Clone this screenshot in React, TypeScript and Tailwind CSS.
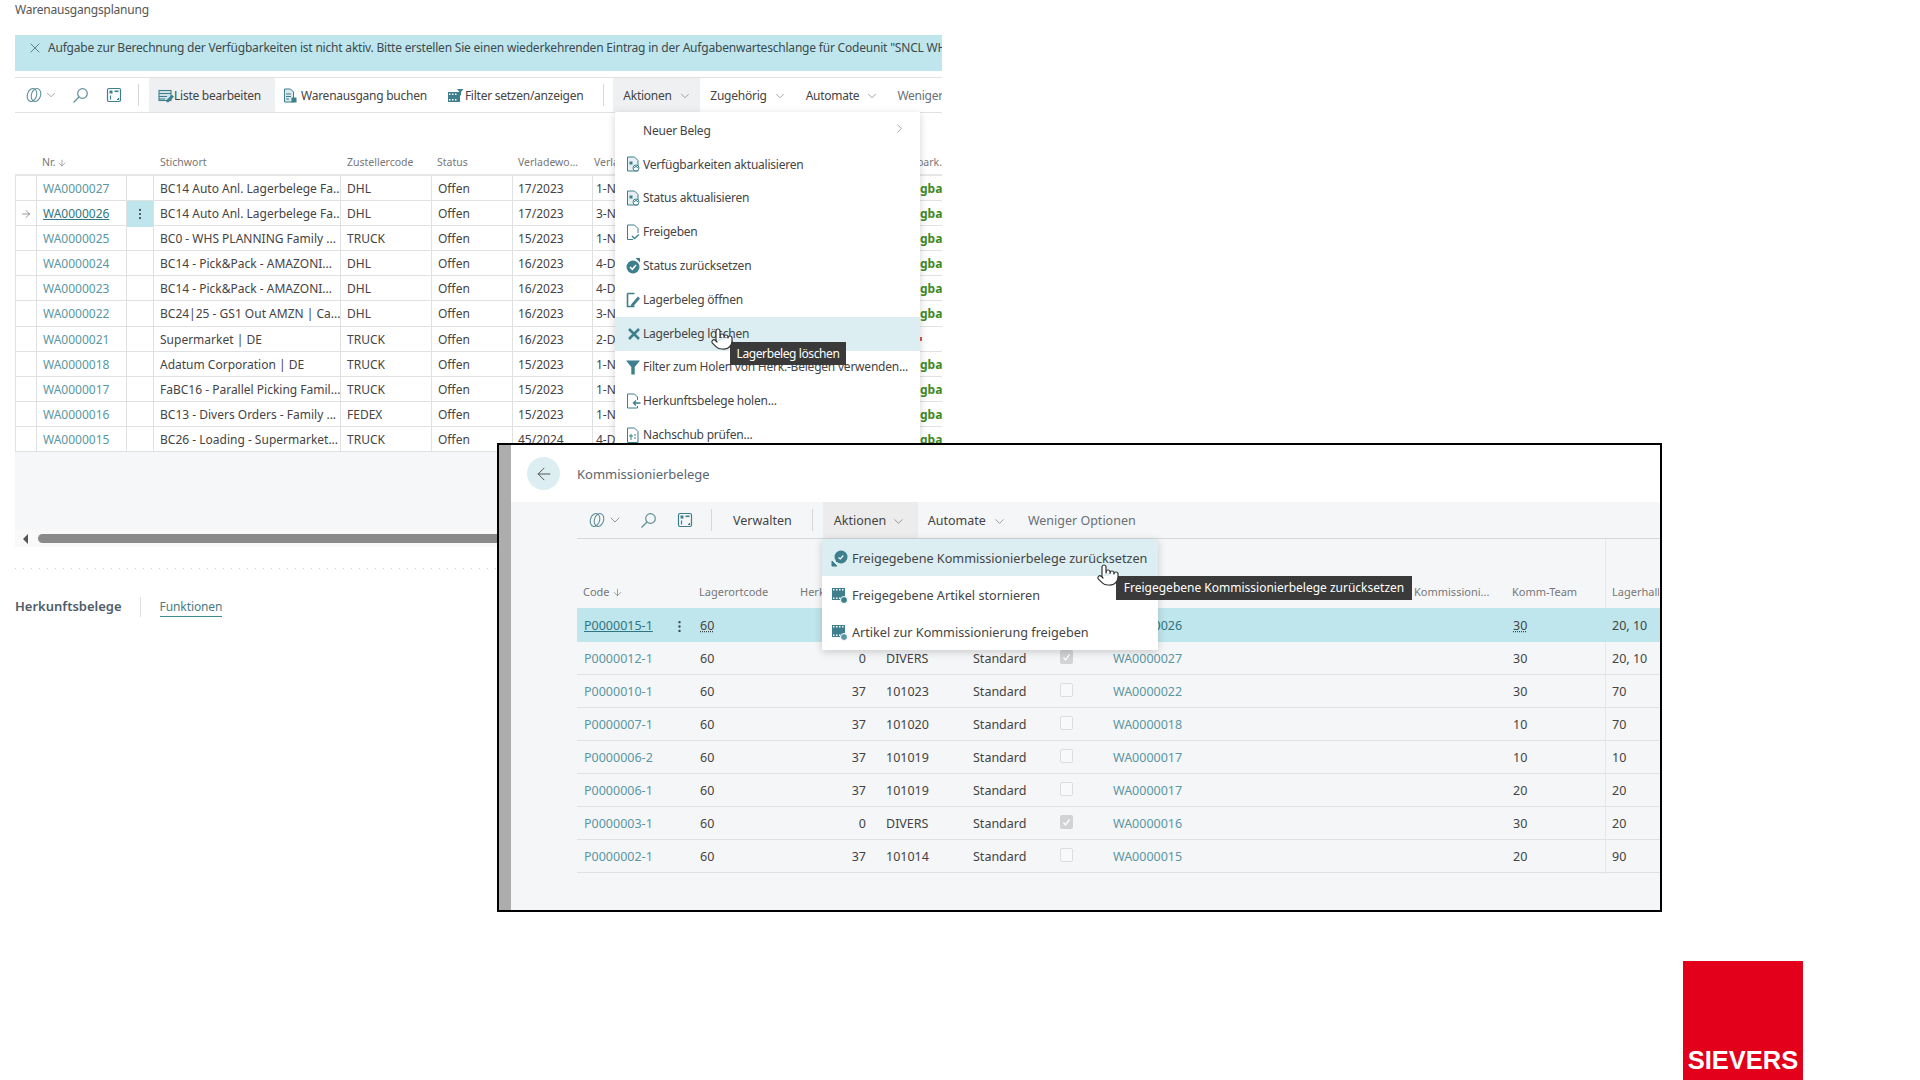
import { ArrowDown, ArrowLeft, ArrowRight, ChevronDown, ChevronRight, EllipsisVertical, Pointer, X } from "lucide-react";

const TEAL = "#3d7f8c";

const CopilotIcon = () => (
  <svg width="18" height="18" viewBox="0 0 18 18" fill="none" stroke="#5f8f99" strokeWidth="1.1">
    <ellipse cx="7" cy="9" rx="4.6" ry="6.6" transform="rotate(18 7 9)" />
    <ellipse cx="11" cy="9" rx="4.6" ry="6.6" transform="rotate(18 11 9)" />
  </svg>
);

const SearchIcon = () => (
  <svg width="17" height="17" viewBox="0 0 17 17" fill="none" stroke="#5f8f99" strokeWidth="1.2">
    <circle cx="10.5" cy="6.5" r="4.8" />
    <path d="M7 10 1.500 15.500" />
  </svg>
);

const TellIcon = () => (
  <svg width="16" height="16" viewBox="0 0 16 16" fill="none" stroke={TEAL} strokeWidth="1.2">
    <rect x="1.500" y="1.500" width="13" height="13" rx="1.500" />
    <rect x="3.500" y="3.500" width="3" height="3" fill={TEAL} stroke="none" />
    <rect x="8.500" y="3.500" width="4" height="1.600" fill={TEAL} stroke="none" />
    <path d="M4.500 8.500v4M11 12.500h1.500V11" />
  </svg>
);

const EditListIcon = () => (
  <svg width="16" height="16" viewBox="0 0 16 16" fill="none" stroke={TEAL} strokeWidth="1.1">
    <rect x="1" y="2.500" width="12" height="10" fill="#cfe3e7" />
    <path d="M1 5.500h12M1 8.500h8M1 11h6" />
    <path d="m9 12.500 5-5 1.200 1.200-5 5H9z" fill={TEAL} />
  </svg>
);

const PostIcon = () => (
  <svg width="16" height="16" viewBox="0 0 16 16" fill="none" stroke={TEAL} strokeWidth="1">
    <path d="M2.500 1h6l3 3v10h-9z" fill="#dbe9ec" />
    <path d="M4 6h5M4 8.500h5M4 11h3" />
    <rect x="9.500" y="9.500" width="5" height="5" fill={TEAL} stroke="none" />
  </svg>
);

const FilterFilmIcon = () => (
  <svg width="17" height="16" viewBox="0 0 17 16" fill={TEAL}>
    <rect x="1" y="4" width="12" height="10" />
    <path d="M2 5.500h1.500v1.500H2zM5 5.500h1.500v1.500H5zM8 5.500h1.500v1.500H8zM2 11h1.500v1.500H2zM5 11h1.500v1.500H5zM8 11h1.500v1.500H8z" fill="#fff" />
    <path d="M10 1h6.500l-2.500 3v3l-1.500 1V4z" />
  </svg>
);

const DocRefreshIcon = () => (
  <svg width="15" height="17" viewBox="0 0 15 17" fill="none" stroke={TEAL} strokeWidth="1">
    <path d="M1.500 1h7l3.500 3.500V15h-10.500z" fill="#e6f0f2" />
    <rect x="3.500" y="5.500" width="3" height="3" fill={TEAL} stroke="none" />
    <circle cx="10" cy="12" r="3" fill="#fff" />
    <path d="M8.500 12a1.500 1.500 0 0 1 3 0" />
  </svg>
);

const DocCheckIcon = () => (
  <svg width="15" height="17" viewBox="0 0 15 17" fill="none" stroke={TEAL} strokeWidth="1">
    <path d="M1.500 1h7l3.500 3.500V9M7 15.500H1.500V1" />
    <path d="m6 12 2.500 2.500L13 10.500" strokeWidth="1.300" />
  </svg>
);

const ResetIcon = () => (
  <svg width="15" height="16" viewBox="0 0 15 16">
    <circle cx="7" cy="9" r="6.500" fill={TEAL} />
    <path d="m4 9 2.300 2.300L10 7" fill="none" stroke="#fff" strokeWidth="1.500" />
    <path d="M9.500 0h4.500v4.500z" fill={TEAL} />
  </svg>
);

const DocEditIcon = () => (
  <svg width="15" height="16" viewBox="0 0 15 16" fill="none" stroke={TEAL} strokeWidth="1">
    <path d="M1.500 1.500h7M1.500 1.500v13h7" strokeWidth="1.600" />
    <path d="m5 12.500 7-8 2 2-7 8H5z" fill={TEAL} stroke="none" />
  </svg>
);

const DeleteIcon = () => (
  <svg width="14" height="14" viewBox="0 0 14 14" fill="none" stroke={TEAL} strokeWidth="2.500">
    <path d="m2 2 10 10M12 2 2 12" />
  </svg>
);

const FunnelIcon = () => (
  <svg width="16" height="16" viewBox="0 0 16 16" fill={TEAL}>
    <path d="M1 1.500h14l-5.300 6.500v7.500H6.300V8z" />
  </svg>
);

const DocArrowIcon = () => (
  <svg width="15" height="16" viewBox="0 0 15 16" fill="none" stroke={TEAL} strokeWidth="1">
    <path d="M1.500 1h7l3 3v3M11.500 13v2h-10V1" />
    <path d="M14.500 10h-7M10 7.500 7.500 10l2.500 2.500" strokeWidth="1.400" />
  </svg>
);

const DocListIcon = () => (
  <svg width="15" height="17" viewBox="0 0 15 17" fill="none" stroke={TEAL} strokeWidth="1">
    <path d="M1.500 1h7l3.500 3.500V15.500h-10.500z" />
    <path d="M4 8h2v2H4zM4 12h2M8 8h2M8 11h2" />
  </svg>
);

const GlobeCheckIcon = () => (
  <svg width="17" height="17" viewBox="0 0 17 17">
    <circle cx="10" cy="7" r="6.500" fill={TEAL} />
    <path d="m7.500 7.500 1.800 1.500 3-3.500" fill="none" stroke="#fff" strokeWidth="1.200" />
    <path d="M1 16v-5l5 5zM5 12l2-2" fill={TEAL} stroke={TEAL} />
  </svg>
);

const FilmXIcon = ({ refresh }: { refresh?: boolean }) => (
  <svg width="17" height="17" viewBox="0 0 17 17" fill={TEAL}>
    <rect x="1" y="1" width="13" height="12" />
    <path d="M2 2h1.500v1.500H2zM5 2h1.500v1.500H5zM8 2h1.500v1.500H8zM11 2h1.500v1.500H11zM2 10.500h1.500V12H2zM5 10.500h1.500V12H5zM8 10.500h1.500V12H8z" fill="#fff" />
    <circle cx="13" cy="13" r="3.500" fill={refresh ? "#5a9aa6" : TEAL} stroke="#fff" />
  </svg>
);

const Hand = () => (
  <Pointer size={24} strokeWidth={1.2} fill="#fff" stroke="#333" />
);

const leftRows = [
  ["WA0000027", "BC14 Auto Anl. Lagerbelege Fa...", "DHL", "17/2023", "1-Nov", "gba"],
  ["WA0000026", "BC14 Auto Anl. Lagerbelege Fa...", "DHL", "17/2023", "3-Nov", "gba"],
  ["WA0000025", "BC0 - WHS PLANNING Family ...", "TRUCK", "15/2023", "1-Nov", "gba"],
  ["WA0000024", "BC14 - Pick&Pack - AMAZONI...", "DHL", "16/2023", "4-Dez", "gba"],
  ["WA0000023", "BC14 - Pick&Pack - AMAZONI...", "DHL", "16/2023", "4-Dez", "gba"],
  ["WA0000022", "BC24|25 - GS1 Out AMZN | Ca...", "DHL", "16/2023", "3-Nov", "gba"],
  ["WA0000021", "Supermarket  | DE", "TRUCK", "16/2023", "2-Dez", ""],
  ["WA0000018", "Adatum Corporation | DE", "TRUCK", "15/2023", "1-Nov", "gba"],
  ["WA0000017", "FaBC16 - Parallel Picking Famil...", "TRUCK", "15/2023", "1-Nov", "gba"],
  ["WA0000016", "BC13 - Divers Orders - Family ...", "FEDEX", "15/2023", "1-Nov", "gba"],
  ["WA0000015", "BC26 - Loading - Supermarket...", "TRUCK", "45/2024", "4-Dez", "gba"],
];

const leftMenu = [
  { label: "Neuer Beleg" },
  { label: "Verfügbarkeiten aktualisieren", icon: <DocRefreshIcon /> },
  { label: "Status aktualisieren", icon: <DocRefreshIcon /> },
  { label: "Freigeben", icon: <DocCheckIcon /> },
  { label: "Status zurücksetzen", icon: <ResetIcon /> },
  { label: "Lagerbeleg öffnen", icon: <DocEditIcon /> },
  { label: "Lagerbeleg löschen", icon: <DeleteIcon />, hover: true },
  { label: "Filter zum Holen von Herk.-Belegen verwenden...", icon: <FunnelIcon /> },
  { label: "Herkunftsbelege holen...", icon: <DocArrowIcon /> },
  { label: "Nachschub prüfen...", icon: <DocListIcon /> },
];

const pickRows = [
  ["P0000012-1", "0", "DIVERS", true, "WA0000027", "30", "20, 10"],
  ["P0000010-1", "37", "101023", false, "WA0000022", "30", "70"],
  ["P0000007-1", "37", "101020", false, "WA0000018", "10", "70"],
  ["P0000006-2", "37", "101019", false, "WA0000017", "10", "10"],
  ["P0000006-1", "37", "101019", false, "WA0000017", "20", "20"],
  ["P0000003-1", "0", "DIVERS", true, "WA0000016", "30", "20"],
  ["P0000002-1", "37", "101014", false, "WA0000015", "20", "90"],
] as const;

const leftCols = "grid grid-cols-[22px_90px_27px_187px_91px_81px_80px_327px_22px]";
const pickCols = "grid grid-cols-[88px_28px_102px_80px_91px_86px_54px_301px_99px_99px_54px]";

const Checkbox = ({ checked }: { checked: boolean }) => (
  <span
    className={
      checked
        ? "flex h-[14px] w-[13px] items-center justify-center rounded-[2px] bg-[#d2d3d4]"
        : "block h-[14px] w-[13px] rounded-[2px] border border-[#dcdde0] bg-[#f8f9fa]"
    }
  >
    {checked && (
      <svg width="9" height="9" viewBox="0 0 9 9" fill="none" stroke="#fff" strokeWidth="1.300">
        <path d="m1.500 4.500 2 2.500 4-5.500" />
      </svg>
    )}
  </span>
);

const LeftPanel = () => (
  <div className="flex w-[927px] flex-col text-[12px] text-[#444]">
    <div className="flex h-[21px] items-center pb-[2px] text-[12px] tracking-[-0.2px] text-[#555]">Warenausgangsplanung</div>

    <div className="mt-[14px] flex h-[36px] items-start overflow-hidden bg-[#bfe6ec] pt-[4px] pl-[12px] text-[#3c4a4f]">
      <X size={16} strokeWidth={1.2} className="mt-[1px] mr-[5px] shrink-0 text-[#44666d]" />
      <span className="whitespace-nowrap text-[12px] tracking-[-0.2px]">
        Aufgabe zur Berechnung der Verfügbarkeiten ist nicht aktiv. Bitte erstellen Sie einen wiederkehrenden Eintrag in der Aufgabenwarteschlange für Codeunit "SNCL WHS Calc Availability"
      </span>
    </div>

    <div className="mt-[6px] flex h-[36px] items-stretch overflow-hidden border-y border-[#dfe1e3] text-[12px] tracking-[-0.25px] whitespace-nowrap">
      <div className="flex shrink-0 items-center pl-[10px]">
        <CopilotIcon />
        <ChevronDown size={14} strokeWidth={1} className="ml-[1px] text-[#666]" />
        <span className="ml-[14px]"><SearchIcon /></span>
        <span className="ml-[17px]"><TellIcon /></span>
        <span className="ml-[16px] h-[22px] w-px bg-[#d5d7d9]" />
      </div>
      <div className="ml-[10px] flex w-[126px] shrink-0 items-center bg-[#eff0f1] pt-[2px] pl-[9px]">
        <EditListIcon />
        <span>Liste bearbeiten</span>
      </div>
      <div className="ml-[7px] flex shrink-0 items-center gap-[3px] pt-[2px]">
        <PostIcon />
        <span>Warenausgang buchen</span>
      </div>
      <div className="ml-[20px] flex shrink-0 items-center gap-px pt-[2px]">
        <FilterFilmIcon />
        <span>Filter setzen/anzeigen</span>
      </div>
      <div className="ml-[20px] flex shrink-0 items-center">
        <span className="h-[22px] w-px bg-[#d5d7d9]" />
      </div>
      <div className="ml-[9px] flex w-[87px] shrink-0 items-center bg-[#eff0f1] pt-[2px] pl-[10px]">
        Aktionen
        <ChevronDown size={14} strokeWidth={1} className="ml-[6px] text-[#666]" />
      </div>
      <div className="ml-[10px] flex shrink-0 items-center pt-[2px]">
        Zugehörig
        <ChevronDown size={14} strokeWidth={1} className="ml-[6px] text-[#666]" />
      </div>
      <div className="ml-[19px] flex shrink-0 items-center pt-[2px]">
        Automate
        <ChevronDown size={14} strokeWidth={1} className="ml-[6px] text-[#666]" />
      </div>
      <div className="ml-[18px] flex shrink-0 items-center pt-[2px] text-[#6a6f75]">Weniger Optionen</div>
    </div>

    <div className={`${leftCols} h-[63px] items-end border-b-2 border-[#e6e7e8] pb-[3px] text-[10.5px] text-[#777]`}>
      <span />
      <span className="flex items-center gap-[2px] pl-[5px]">Nr. <ArrowDown size={10} strokeWidth={1.5} /></span>
      <span />
      <span className="pl-[6px]">Stichwort</span>
      <span className="pl-[6px]">Zustellercode</span>
      <span className="pl-[5px]">Status</span>
      <span className="pl-[5px]">Verladewo...</span>
      <span className="overflow-hidden pl-[1px]">Verladedatum</span>
      <span className="flex justify-end whitespace-nowrap">Verfügbark.</span>
    </div>

    {leftRows.map((r, i) => (
      <div key={r[0]} className={`${leftCols} h-[25.1px] items-stretch border-b border-[#dfe1e3] leading-[26px] whitespace-nowrap`}>
        <span className="flex items-center justify-center border-x border-[#dfe1e3]">
          {i === 1 && <ArrowRight size={12} strokeWidth={1.2} className="text-[#555]" />}
        </span>
        <span className={i === 1 ? "border-r border-[#dfe1e3] pl-[6px] text-[#2f7582] underline" : "border-r border-[#dfe1e3] pl-[6px] text-[#5a97a3]"}>{r[0]}</span>
        <span className={i === 1 ? "flex items-center justify-center border-r border-[#dfe1e3] bg-[#bfe6ec]" : "border-r border-[#dfe1e3]"}>
          {i === 1 && <EllipsisVertical size={14} strokeWidth={1.8} className="text-[#3c4a4f]" />}
        </span>
        <span className="overflow-hidden border-r border-[#dfe1e3] pl-[6px]">{r[1]}</span>
        <span className="border-r border-[#dfe1e3] pl-[6px]">{r[2]}</span>
        <span className="border-r border-[#dfe1e3] pl-[6px]">Offen</span>
        <span className="border-r border-[#dfe1e3] pl-[5px]">{r[3]}</span>
        <span className="pl-[3px]">{r[4]}</span>
        {r[5] ? (
          <span className="font-bold text-[#3f8a1f]">{r[5]}</span>
        ) : (
          <span className="mt-[10px] h-[4px] w-[2px] bg-[#d9534f]" />
        )}
      </div>
    ))}

    <div className="h-[78px] bg-[#f6f7f8]" />
    <div className="flex h-[17px] items-center bg-[#f9f9fa]">
      <span className="ml-[8px] h-0 w-0 border-y-[5px] border-r-[5px] border-y-transparent border-r-[#555]" />
      <span className="ml-[10px] h-[9px] flex-1 rounded-full bg-[#8a8a8a]" />
    </div>
    <div className="mt-[21px] h-px bg-[repeating-linear-gradient(90deg,#d0d2d4_0_1px,transparent_1px_8px)]" />

    <div className="mt-[27px] flex h-[22px] items-center text-[13px]">
      <span className="font-semibold text-[#505c66]">Herkunftsbelege</span>
      <span className="ml-[18px] h-[20px] w-px bg-[#dfe1e3]" />
      <span className="ml-[19px] border-b border-[#3d8a96] text-[12px] tracking-[-0.1px] text-[#4a7c85]">Funktionen</span>
    </div>
  </div>
);

const LeftMenu = () => (
  <div className="absolute top-[112px] left-[615px] flex h-[331px] w-[305px] flex-col overflow-hidden bg-white pt-[2px] text-[12px] tracking-[-0.22px] text-[#444] shadow-[0_2px_8px_rgba(0,0,0,0.18)]">
    {leftMenu.map((m) => (
      <div key={m.label} className={m.hover ? "flex h-[33.800px] shrink-0 items-center bg-[#dceef1]" : "flex h-[33.800px] shrink-0 items-center"}>
        <span className="flex w-[28px] shrink-0 justify-end pr-[2px]">{m.icon}</span>
        <span className="whitespace-nowrap">{m.label}</span>
        {m.label === "Neuer Beleg" && <ChevronRight size={15} strokeWidth={1} className="mt-[-4px] mr-[13px] ml-auto text-[#777]" />}
      </div>
    ))}
  </div>
);

const headCell = "flex h-full items-end pb-[8px] whitespace-nowrap";

const PickWindow = () => (
  <div className="absolute top-[443px] left-[497px] flex h-[469px] w-[1165px] border-2 border-black bg-[#f5f6f8] text-[12.5px] text-[#444]">
    <div className="w-[12px] shrink-0 bg-[#adadad]" />
    <div className="flex min-w-0 flex-1 flex-col">
      <div className="flex h-[57px] items-center bg-white pl-[16px]">
        <span className="flex h-[33px] w-[33px] items-center justify-center rounded-full bg-[#dceef1]">
          <ArrowLeft size={20} strokeWidth={1.2} className="text-[#555]" />
        </span>
        <span className="mt-[3px] ml-[17px] text-[13px] text-[#5b6670]">Kommissionierbelege</span>
      </div>

      <div className="ml-[66px] flex h-[37px] items-stretch border-b border-[#d5d7d9]">
        <div className="flex items-center pl-[11px]">
          <CopilotIcon />
          <ChevronDown size={16} strokeWidth={1} className="ml-[1px] text-[#666]" />
          <span className="ml-[17px]"><SearchIcon /></span>
          <span className="ml-[20px]"><TellIcon /></span>
          <span className="ml-[18px] h-[22px] w-px bg-[#d5d7d9]" />
        </div>
        <div className="ml-[21px] flex items-center pt-[2px]">Verwalten</div>
        <div className="ml-[20px] flex items-center"><span className="h-[22px] w-px bg-[#d5d7d9]" /></div>
        <div className="ml-[10px] flex w-[95px] items-center bg-[#ececec] pt-[2px] pl-[11px]">
          Aktionen
          <ChevronDown size={15} strokeWidth={1} className="ml-[5px] text-[#666]" />
        </div>
        <div className="ml-[10px] flex items-center pt-[2px]">
          Automate
          <ChevronDown size={15} strokeWidth={1} className="ml-[6px] text-[#666]" />
        </div>
        <div className="ml-[21px] flex items-center pt-[2px] text-[#6a6f75]">Weniger Optionen</div>
      </div>

      <div className="ml-[66px] flex flex-col">
        <div className={`${pickCols} h-[69px] items-stretch text-[11px] text-[#777]`}>
          <span className={`${headCell} gap-[2px] pl-[6px]`}>Code <ArrowDown size={11} strokeWidth={1.5} className="mb-[2px]" /></span>
          <span />
          <span className={`${headCell} pl-[6px]`}>Lagerortcode</span>
          <span className={`${headCell} pl-[5px]`}>Herkunft</span>
          <span />
          <span />
          <span />
          <span />
          <span className={`${headCell} pl-[7px]`}>Kommissioni...</span>
          <span className={`${headCell} pl-[6px]`}>Komm-Team</span>
          <span className={`${headCell} overflow-hidden border-l border-[#e6e7e8] pl-[6px]`}>Lagerhalle</span>
        </div>

        <div className={`${pickCols} h-[34px] items-center bg-[#bfe6ec] pt-[2px]`}>
          <span className="pl-[7px] text-[#2f7582] underline">P0000015-1</span>
          <span className="flex justify-center"><EllipsisVertical size={15} strokeWidth={1.8} className="text-[#3c4a4f]" /></span>
          <span className="pl-[7px] underline decoration-dotted">60</span>
          <span />
          <span />
          <span />
          <span />
          <span className="pl-[7px] text-[#2f7582]">WA0000026</span>
          <span />
          <span className="pl-[7px] underline decoration-dotted">30</span>
          <span className="pl-[7px]">20, 10</span>
        </div>

        {pickRows.map((r) => (
          <div key={r[0]} className={`${pickCols} h-[33px] items-stretch border-b border-[#dfe1e3] leading-[34px]`}>
            <span className="pl-[7px] text-[#5a97a3]">{r[0]}</span>
            <span />
            <span className="pl-[7px]">60</span>
            <span className="pr-[9px] text-right">{r[1]}</span>
            <span className="pl-[11px]">{r[2]}</span>
            <span className="pl-[7px]">Standard</span>
            <span className="flex items-center pb-[4px] pl-[8px]"><Checkbox checked={r[3]} /></span>
            <span className="pl-[7px] text-[#5a97a3]">{r[4]}</span>
            <span />
            <span className="pl-[7px]">{r[5]}</span>
            <span className="border-l border-[#e6e7e8] pl-[6px]">{r[6]}</span>
          </div>
        ))}
      </div>
    </div>
  </div>
);

const PickMenu = () => (
  <div className="absolute top-[539px] left-[822px] flex h-[111px] w-[336px] flex-col bg-white text-[12.65px] text-[#444] shadow-[0_2px_8px_rgba(0,0,0,0.18)]">
    <div className="flex h-[37px] items-center gap-[4px] bg-[#dceef1] pt-[2px] pl-[9px]"><GlobeCheckIcon />Freigegebene Kommissionierbelege zurücksetzen</div>
    <div className="flex h-[37px] items-center gap-[4px] pt-[2px] pl-[9px]"><FilmXIcon />Freigegebene Artikel stornieren</div>
    <div className="flex h-[37px] items-center gap-[4px] pt-[2px] pl-[9px]"><FilmXIcon refresh />Artikel zur Kommissionierung freigeben</div>
  </div>
);

export default function App() {
  return (
    <div className="relative flex h-[1080px] w-[1920px] flex-col overflow-hidden bg-white pl-[15px] font-['Noto_Sans',sans-serif]">
      <LeftPanel />
      <LeftMenu />
      <PickWindow />
      <PickMenu />

      <div className="absolute top-[342px] left-[730px] flex h-[23px] w-[116px] items-center justify-center bg-[#3a3a3a] text-[12px] tracking-[-0.4px] text-white">Lagerbeleg löschen</div>
      <div className="absolute top-[576px] left-[1116px] flex h-[24px] w-[296px] items-center justify-center bg-[#3a3a3a] text-[12px] whitespace-nowrap text-white">Freigegebene Kommissionierbelege zurücksetzen</div>
      <div className="absolute top-[327px] left-[710px]"><Hand /></div>
      <div className="absolute top-[563px] left-[1096px]"><Hand /></div>

      <div className="mt-auto mr-[117px] flex h-[119px] w-[120px] items-end justify-center self-end bg-[#e2001a] pb-[3px] font-['Liberation_Sans',sans-serif] text-[25.5px] leading-[34px] font-bold text-white">
        SIEVERS
      </div>
    </div>
  );
}
